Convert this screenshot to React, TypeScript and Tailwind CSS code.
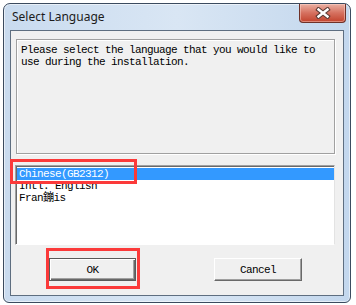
import React from "react";

const mono = "font-['Liberation_Mono','Noto_Sans_CJK_SC',monospace] text-[11px] leading-[12px] tracking-[-0.6px]";

function CloseGlyph() {
    return (
        <svg width="16" height="12" viewBox="0 0 16 12">
            <path d="M3.5 2.5 L12.5 9.5 M12.5 2.5 L3.5 9.5" stroke="#5a3a34" strokeWidth="4.5" strokeLinecap="square" />
            <path d="M3.5 2.5 L12.5 9.5 M12.5 2.5 L3.5 9.5" stroke="#ffffff" strokeWidth="2.4" strokeLinecap="square" />
        </svg>
    );
}

function ClassicButton({ label, isDefault }: { label: string; isDefault?: boolean }) {
    const frame = isDefault
        ? "border border-[#5a5a5a] shadow-[inset_1px_1px_0_#ffffff,inset_-1px_-1px_0_#696969,inset_-2px_-2px_0_#a0a0a0]"
        : "border border-t-white border-l-white border-b-[#696969] border-r-[#696969] shadow-[inset_-1px_-1px_0_#a0a0a0]";
    return (
        <button
            type="button"
            className={`h-[23px] flex items-center justify-center bg-[#f0f0f0] text-black ${mono} ${frame} ${isDefault ? "w-[87px]" : "w-[88px]"}`}
        >
            {label}
        </button>
    );
}

export default function App() {
    const items = ["Chinese(GB2312)", "Intl. English", "Fran鏰is"];

    return (
        <div className="relative w-[356px] h-[305px] bg-white pt-[3px] pl-[3px] overflow-hidden">
            <div className="w-[348px] h-[300px] border border-[#3b4b5f] rounded-t-[7px] rounded-b-[6px] flex flex-col px-[6px] pb-[6px] bg-gradient-to-r from-[#c9dbef] via-[#d9e6f4] to-[#c3d7ed] shadow-[inset_0_0_0_1px_rgba(255,255,255,0.55)]">
                {/* title bar */}
                <div className="h-[26px] flex items-start justify-between">
                    <span className="mt-[5px] ml-[2px] font-['Noto_Sans',sans-serif] text-[12px] leading-[16px] text-[#1b1b1b]">
                        Select Language
                    </span>
                    <div className="mr-[-2px] w-[47px] h-[19px] rounded-b-[4px] border border-t-0 border-[#6e3128] bg-gradient-to-b from-[#eab0a3] via-[#d5705f] to-[#c2412b] flex items-center justify-center shadow-[inset_0_0_0_1px_rgba(255,220,210,0.45)]">
                        <CloseGlyph />
                    </div>
                </div>

                {/* client area */}
                <div className="flex-1 border border-[#5e6e80] bg-[#f0f0f0] flex flex-col">
                    <div className="ml-[5px] mt-[8px] w-[319px] h-[115px] border border-[#a0a0a0] shadow-[1px_1px_0_#ffffff,inset_1px_1px_0_#ffffff] pl-[4px] pt-[4px]">
                        <p className={`${mono} text-black`}>
                            Please select the language that you would like to
                            <br />
                            use during the installation.
                        </p>
                    </div>

                    <div className="ml-[4px] mt-[11px] w-[320px] h-[80px] bg-white border border-t-[#a0a0a0] border-l-[#a0a0a0] border-b-white border-r-[#e3e3e3] shadow-[inset_1px_1px_0_#696969] pt-[2px] pl-[1px]">
                        {items.map((item, i) => (
                            <div
                                key={item}
                                className={`h-[12px] pl-[2px] ${mono} ${i === 0 ? "bg-[#3399ff] text-white" : "text-black"}`}
                            >
                                {item}
                            </div>
                        ))}
                    </div>

                    <div className="flex mt-[13px] ml-[38px] gap-[78px]">
                        <ClassicButton label="OK" isDefault />
                        <ClassicButton label="Cancel" />
                    </div>
                </div>
            </div>

            {/* red annotation boxes */}
            <div className="absolute left-[10px] top-[159px] w-[127px] h-[25px] border-[3px] border-[#fb3a3a]" />
            <div className="absolute left-[46px] top-[248px] w-[94px] h-[41px] border-[3px] border-[#fb3a3a]" />
        </div>
    );
}
